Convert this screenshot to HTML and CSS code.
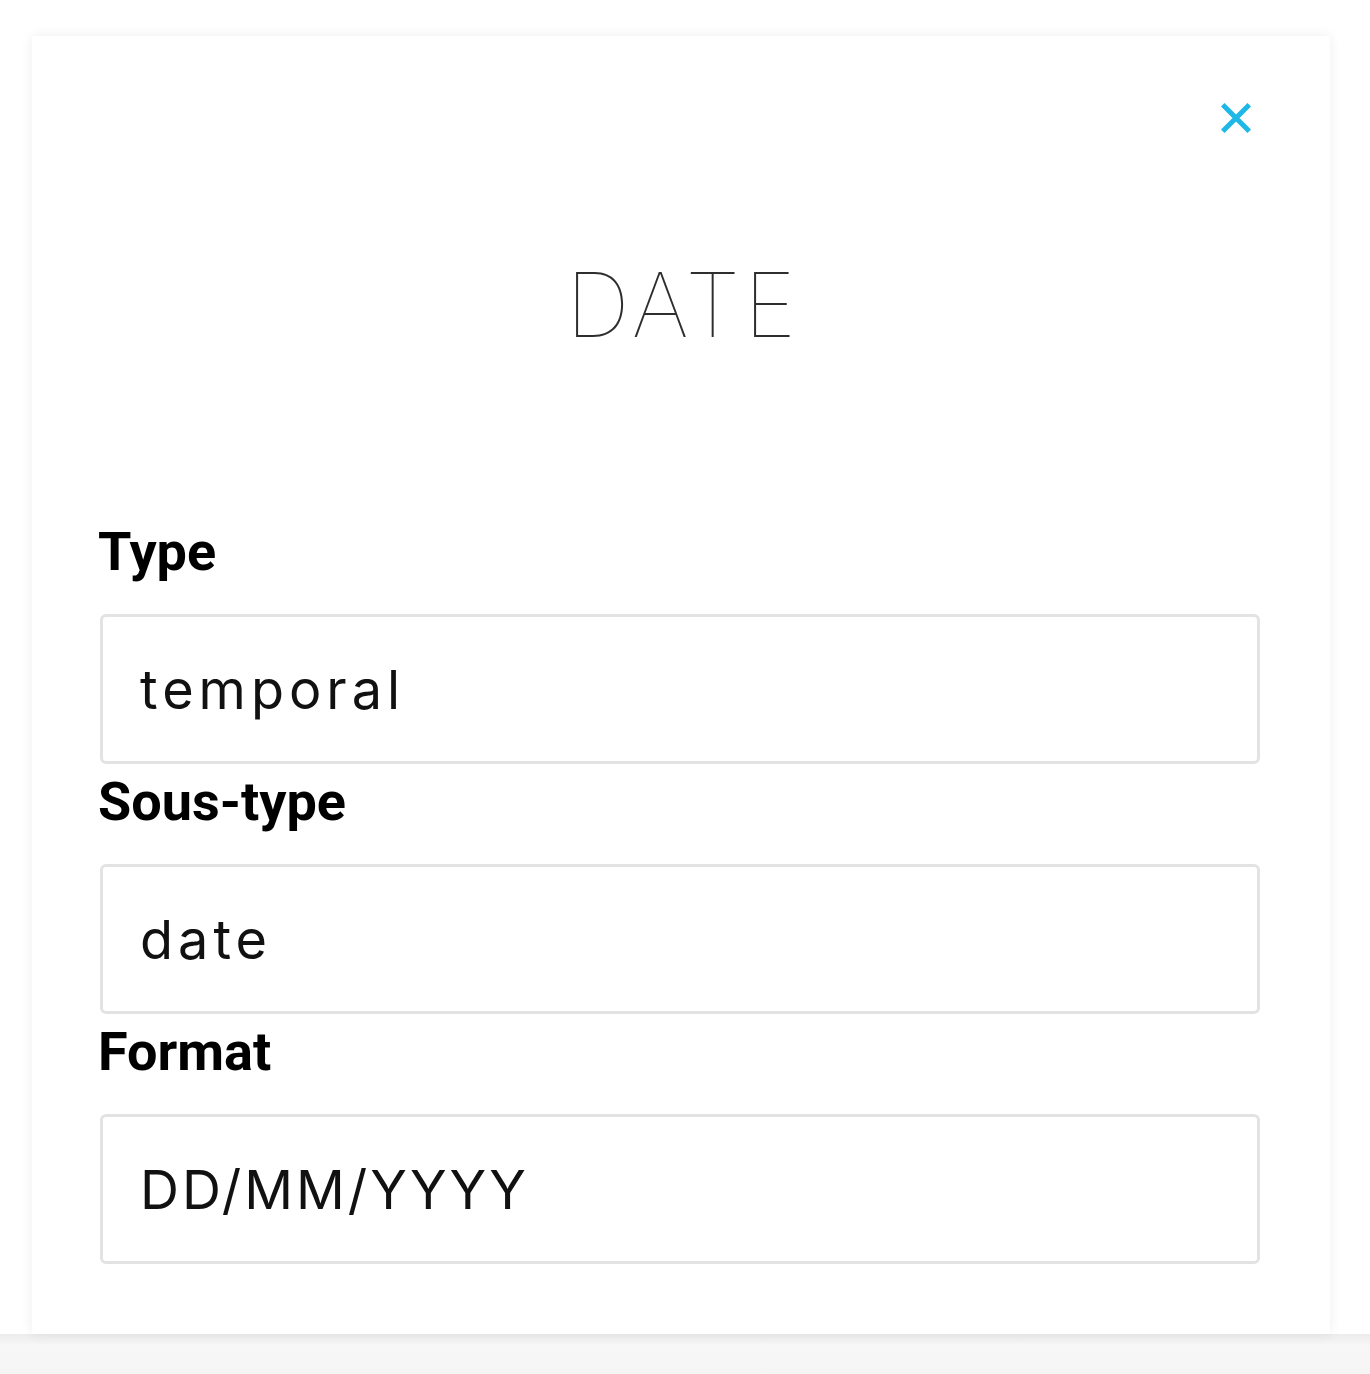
FILE: index.html
```html
<!DOCTYPE html>
<html lang="fr">
<head>
<meta charset="utf-8">
<title>Date</title>
<link rel="stylesheet" href="styles.css">
</head>
<body>
<div class="page">
  <div class="card">
    <div class="close-row">
      <button class="close" aria-label="Fermer">
        <svg width="30" height="30" viewBox="0 0 30 30"><path d="M3.5 3.5 L26.5 26.5 M26.5 3.5 L3.5 26.5" stroke="#1eb8e6" stroke-width="5" stroke-linecap="square" fill="none"/></svg>
      </button>
    </div>
    <h1 class="title">DATE</h1>
    <div class="fields">
      <label class="label">Type</label>
      <div class="field">temporal</div>
      <label class="label">Sous-type</label>
      <div class="field">date</div>
      <label class="label">Format</label>
      <div class="field field--caps">DD/MM/YYYY</div>
    </div>
  </div>
</div>
<div class="band"></div>
</body>
</html>
```
FILE: styles.css
```css
html, body {
  margin: 0;
  padding: 0;
  background: #ffffff;
}
body {
  width: 1370px;
  height: 1374px;
  overflow: hidden;
  display: flex;
  flex-direction: column;
}
.page {
  padding: 36px 40px 0 32px;
}
.card {
  background: #ffffff;
  box-shadow: 0 0 12px rgba(0, 0, 0, 0.07);
  padding: 67px 70px 70px 68px;
  position: relative;
  z-index: 1;
}
.close-row {
  display: flex;
  justify-content: flex-end;
  padding-right: 9px;
}
.close {
  border: 0;
  background: none;
  padding: 0;
  margin: 0;
  width: 30px;
  height: 30px;
  display: block;
  cursor: pointer;
}
.close svg {
  display: block;
}
.title {
  margin: 127px 0 0 0;
  text-align: center;
  font-family: "Inter", "Liberation Sans", sans-serif;
  font-weight: 100;
  font-size: 89px;
  line-height: 1;
  letter-spacing: 4px;
  padding-left: 6px;
  color: #2e2e2e;
}
.fields {
  margin-top: 165px;
  display: flex;
  flex-direction: column;
}
.label {
  font-family: "Roboto", "Liberation Sans", sans-serif;
  font-weight: 700;
  font-size: 54px;
  line-height: 76px;
  color: #000000;
  margin-left: -2px;
  margin-bottom: 24px;
}
.field {
  height: 144px;
  border: 3px solid #e3e3e3;
  border-radius: 6px;
  padding-left: 37px;
  display: flex;
  align-items: center;
  font-family: "Inter", "Liberation Sans", sans-serif;
  font-weight: 400;
  font-size: 54px;
  letter-spacing: 5px;
  color: #111111;
}
.field--caps {
  letter-spacing: 3px;
}
.band {
  flex: 1;
  background: linear-gradient(#ececec, #f7f7f7 30%, #f5f5f5);
}
```
